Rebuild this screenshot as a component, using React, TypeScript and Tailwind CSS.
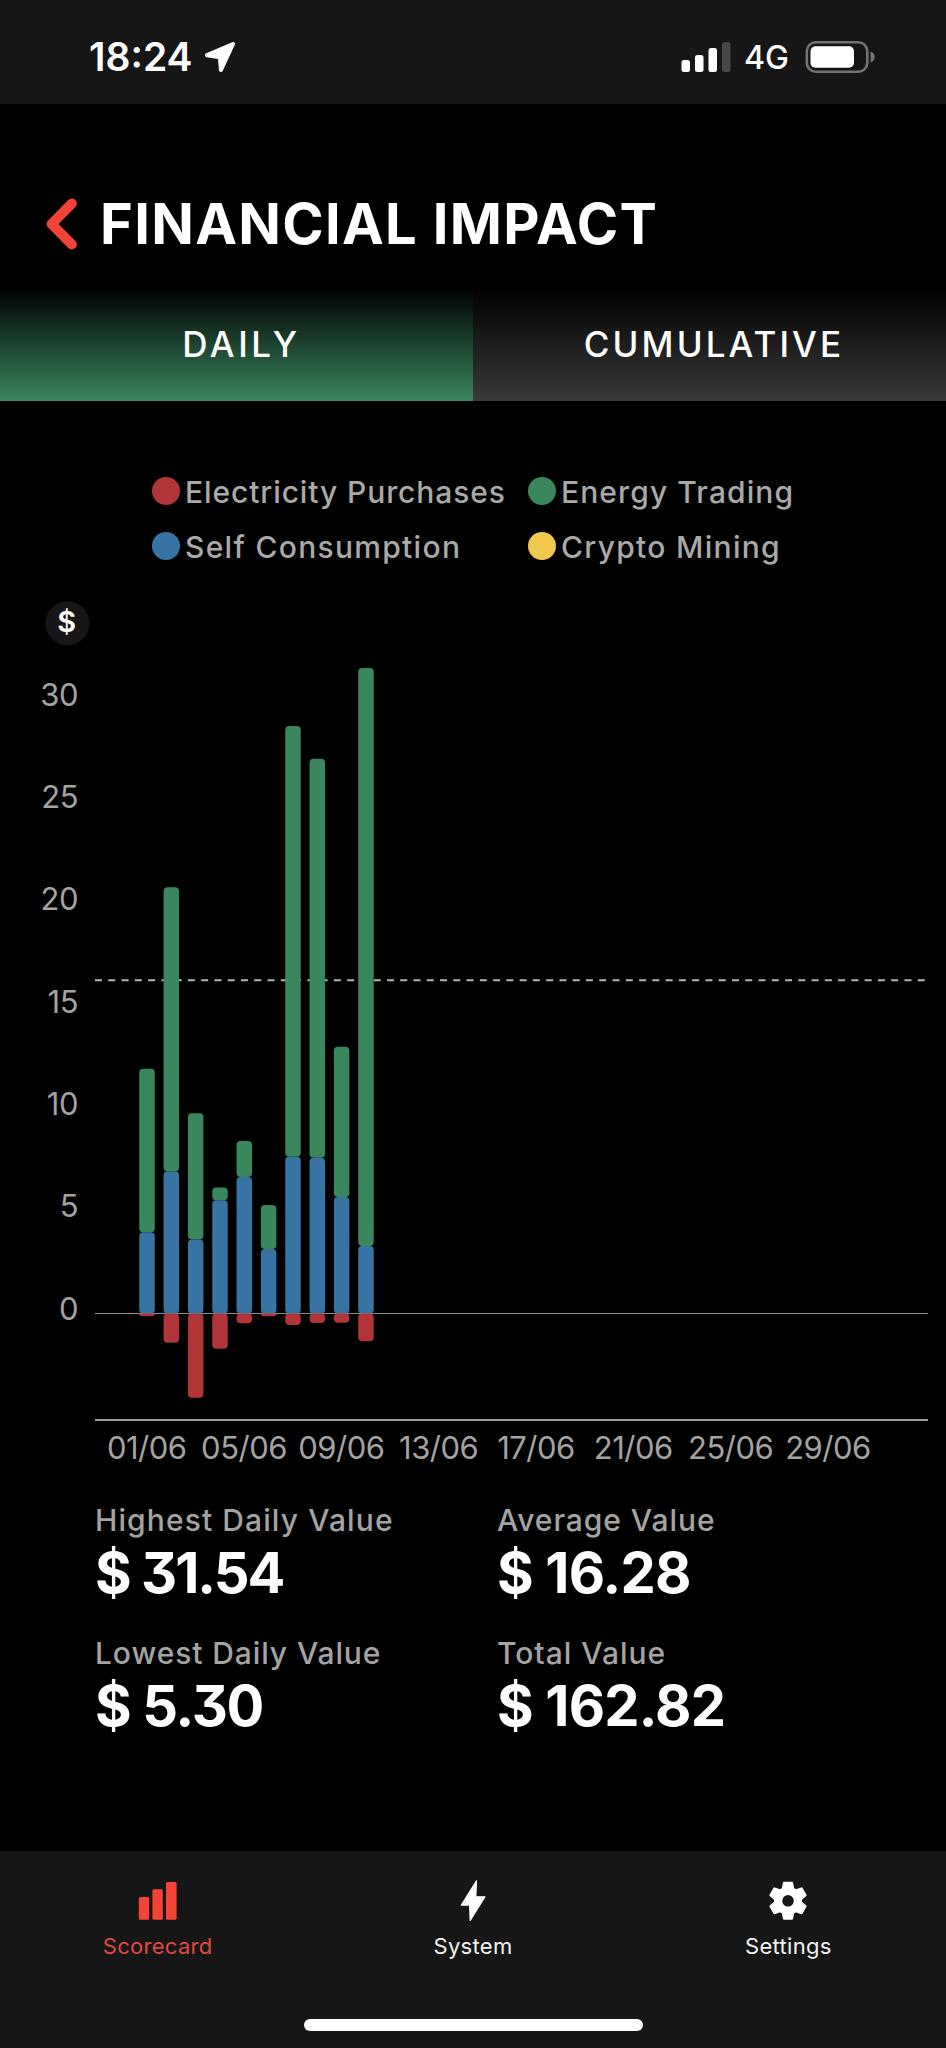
import { useState } from "react"
import type { ReactNode } from "react"

interface Day {
  trading: number
  self: number
  purchases: number
}

// dollar values per day, first entry is 01/06
const days: Day[] = [
  { trading: 7.99, self: 3.97, purchases: 0.13 },
  { trading: 13.87, self: 6.95, purchases: 1.43 },
  { trading: 6.16, self: 3.62, purchases: 4.11 },
  { trading: 0.62, self: 5.53, purchases: 1.72 },
  { trading: 1.76, self: 6.67, purchases: 0.48 },
  { trading: 2.15, self: 3.15, purchases: 0.13 },
  { trading: 21.04, self: 7.66, purchases: 0.56 },
  { trading: 19.49, self: 7.61, purchases: 0.46 },
  { trading: 7.34, self: 5.69, purchases: 0.45 },
  { trading: 28.24, self: 3.3, purchases: 1.36 },
]

const legend = [
  { label: "Electricity Purchases", dot: "bg-[#b03438]", text: "tracking-[0.9px]" },
  { label: "Energy Trading", dot: "bg-[#3a865d]", text: "tracking-[1.1px]" },
  { label: "Self Consumption", dot: "bg-[#3774a3]", text: "tracking-[1.3px]" },
  { label: "Crypto Mining", dot: "bg-[#f2c94f]", text: "tracking-[1.3px]" },
]

const stats = [
  { label: "Highest Daily Value", value: "$ 31.54", labelText: "tracking-[1.1px]", text: "tracking-[-2px]" },
  { label: "Average Value", value: "$ 16.28", labelText: "tracking-[0.95px]", text: "tracking-[-0.8px]" },
  { label: "Lowest Daily Value", value: "$ 5.30", labelText: "tracking-[0.9px]", text: "tracking-[-1.3px]" },
  { label: "Total Value", value: "$ 162.82", labelText: "tracking-[1px]", text: "tracking-[-0.8px]" },
]

const yTicks = [30, 25, 20, 15, 10, 5, 0]
const xTicks = ["01/06", "05/06", "09/06", "13/06", "17/06", "21/06", "25/06", "29/06"]

const zeroY = 740.5
const unit = 20.47
const firstX = 147
const step = 24.33
const average = 16.28

function StatusBar() {
  return (
    <div className="h-[104px] shrink-0 bg-[#161616] pt-[9px] pl-[89px] pr-[71px] flex items-center justify-between">
      <div className="flex items-center gap-[11px]">
        <span className="text-[39px] leading-none font-semibold">18:24</span>
        <svg width="32" height="32" viewBox="0 0 32 32">
          <path
            d="M29 3L3 14.2L15.8 16.2L17 29Z"
            fill="white"
            stroke="white"
            strokeWidth="4"
            strokeLinejoin="round"
          />
        </svg>
      </div>
      <div className="flex items-center">
        <svg width="50" height="32" viewBox="0 0 50 32">
          <rect x="0.5" y="19" width="8.5" height="12" rx="2.5" fill="white" />
          <rect x="14" y="14" width="8.5" height="17" rx="2.5" fill="white" />
          <rect x="27.5" y="7" width="8.5" height="24" rx="2.5" fill="white" />
          <rect x="41" y="1" width="8.5" height="30" rx="2.5" fill="#474747" />
        </svg>
        <span className="ml-[13px] pt-[3px] text-[32px] leading-none font-medium">4G</span>
        <svg width="70" height="32" viewBox="0 0 70 32" className="ml-[16px]">
          <rect x="1.8" y="1.3" width="60.5" height="29.4" rx="9" fill="none" stroke="#737373" strokeWidth="2.6" />
          <rect x="5.5" y="5.2" width="43.5" height="21.6" rx="5" fill="white" />
          <path d="M65.5 10.5C71 12 71 20 65.5 21.5Z" fill="#737373" />
        </svg>
      </div>
    </div>
  )
}

function Header() {
  return (
    <div className="h-[180px] shrink-0 pt-[60px] pl-[45px] flex items-center">
      <svg width="33" height="54" viewBox="0 0 33 54">
        <path
          d="M26.8 6.5L6.6 27L26.8 47.5"
          fill="none"
          stroke="#f44336"
          strokeWidth="10"
          strokeLinecap="round"
          strokeLinejoin="round"
        />
      </svg>
      <h1 className="ml-[22px] text-[56px] leading-none font-bold tracking-[1.3px]">FINANCIAL IMPACT</h1>
    </div>
  )
}

function Chart() {
  return (
    <svg width="946" height="915" viewBox="0 0 946 915" className="shrink-0" fontFamily="Inter, sans-serif">
      <circle cx="67.5" cy="50.3" r="22" fill="#171717" />
      <text x="66.7" y="59" fontSize="29" fontWeight="600" fill="white" textAnchor="middle">
        $
      </text>

      {yTicks.map((tick) => (
        <text
          key={tick}
          x="78.3"
          y={746.7 - tick * unit}
          fontSize="31"
          fill="#a3a3a3"
          textAnchor="end"
          letterSpacing="-0.3"
        >
          {tick}
        </text>
      ))}

      <line
        x1="95"
        x2="925"
        y1={zeroY - average * unit}
        y2={zeroY - average * unit}
        stroke="#b4b4b4"
        strokeWidth="2"
        strokeDasharray="7 6.27"
      />
      <rect x="95" y="740" width="833" height="1" fill="#8f8f8f" />
      <rect x="95" y="846" width="833" height="2" fill="#9c9c9c" />

      {days.map((day, i) => {
        const x = firstX + i * step - 7.75
        const selfTop = zeroY - day.self * unit
        const tradingTop = selfTop - day.trading * unit
        return (
          <g key={i}>
            <rect x={x} y={tradingTop} width="15.5" height={day.trading * unit} rx="4" fill="#3a865d" />
            <rect x={x} y={selfTop} width="15.5" height={day.self * unit} rx="4" fill="#3774a3" />
            <rect x={x} y={zeroY} width="15.5" height={day.purchases * unit} rx="4" fill="#b03438" />
          </g>
        )
      })}

      {xTicks.map((tick, i) => (
        <text
          key={tick}
          x={firstX + i * 4 * step - 0.3}
          y="886"
          fontSize="31"
          fill="#a3a3a3"
          textAnchor="middle"
          letterSpacing="-0.5"
        >
          {tick}
        </text>
      ))}
    </svg>
  )
}

function NavItem({ label, text, children }: { label: string; text: string; children: ReactNode }) {
  return (
    <button className="flex-1 flex flex-col items-center">
      <svg width="44" height="44" viewBox="0 0 44 44">
        {children}
      </svg>
      <span className={`mt-2 text-[22px] leading-[30px] tracking-[0.3px] ${text}`}>{label}</span>
    </button>
  )
}

function BottomNav() {
  return (
    <div className="h-[197px] shrink-0 mt-auto bg-[#161616] pt-[28px] flex flex-col">
      <div className="flex">
        <NavItem label="Scorecard" text="text-[#de4a40]">
          <rect x="2.8" y="18" width="10.4" height="22.7" rx="1.5" fill="#f44336" />
          <rect x="16.4" y="10.3" width="10.4" height="30.4" rx="1.5" fill="#f44336" />
          <rect x="30" y="3" width="10.6" height="37.7" rx="1.5" fill="#f44336" />
        </NavItem>
        <NavItem label="System" text="text-[#f2f2f2]">
          <path
            d="M25.5 1.8L24.8 17.8H34L19.2 41.4L18.6 26.1H10.4Z"
            fill="white"
            stroke="white"
            strokeWidth="1.2"
            strokeLinejoin="round"
          />
        </NavItem>
        <NavItem label="Settings" text="text-[#f2f2f2]">
          <g transform="translate(22 21.8)" fill="white">
            {[0, 60, 120, 180, 240, 300].map((angle) => (
              <path
                key={angle}
                d="M-4 -18L4 -18L5.6 -10H-5.6Z"
                transform={`rotate(${angle})`}
                stroke="white"
                strokeWidth="2"
                strokeLinejoin="round"
              />
            ))}
            <circle r="14" />
            <circle r="5.8" fill="#161616" />
          </g>
        </NavItem>
      </div>
      <div className="mt-auto mb-[17px] ml-[304px] w-[339px] h-3 rounded-full bg-white" />
    </div>
  )
}

export default function App() {
  const [tab, setTab] = useState("daily")

  const tabs = [
    { id: "daily", label: "DAILY", text: "pl-[10px] tracking-[3.6px]" },
    { id: "cumulative", label: "CUMULATIVE", text: "pl-[9px] tracking-[3.1px]" },
  ]

  return (
    <div className="w-[946px] h-[2048px] bg-black text-white font-['Inter',sans-serif] flex flex-col overflow-hidden">
      <StatusBar />
      <Header />

      <div className="h-[117px] shrink-0 flex">
        {tabs.map((t) => (
          <button
            key={t.id}
            onClick={() => setTab(t.id)}
            className={`w-[473px] pt-1 text-[35px] font-medium bg-linear-to-b/srgb from-black from-3% ${t.text} ${
              tab === t.id ? "to-[#3a865d]" : "to-[#3a3a3a]"
            }`}
          >
            {t.label}
          </button>
        ))}
      </div>

      <div className="mt-[62px] ml-[152px] h-[110px] shrink-0 grid grid-cols-[376px_376px] grid-rows-2">
        {legend.map((item) => (
          <div key={item.label} className="flex items-center gap-[5px]">
            <span className={`size-7 rounded-full ${item.dot}`} />
            <span className={`pt-[3px] text-[30px] leading-none font-[450] text-[#a9a9a9] whitespace-nowrap ${item.text}`}>
              {item.label}
            </span>
          </div>
        ))}
      </div>

      <Chart />

      <div className="mt-3 ml-[95px] grid grid-cols-[402px_402px] gap-y-[27px]">
        {stats.map((s) => (
          <div key={s.label}>
            <p className={`text-[30px] leading-10 font-[450] text-[#a3a3a3] ${s.labelText}`}>{s.label}</p>
            <p className={`pt-px text-[56px] leading-[65px] font-bold [font-feature-settings:'cv09'] ${s.text}`}>
              {s.value}
            </p>
          </div>
        ))}
      </div>

      <BottomNav />
    </div>
  )
}
